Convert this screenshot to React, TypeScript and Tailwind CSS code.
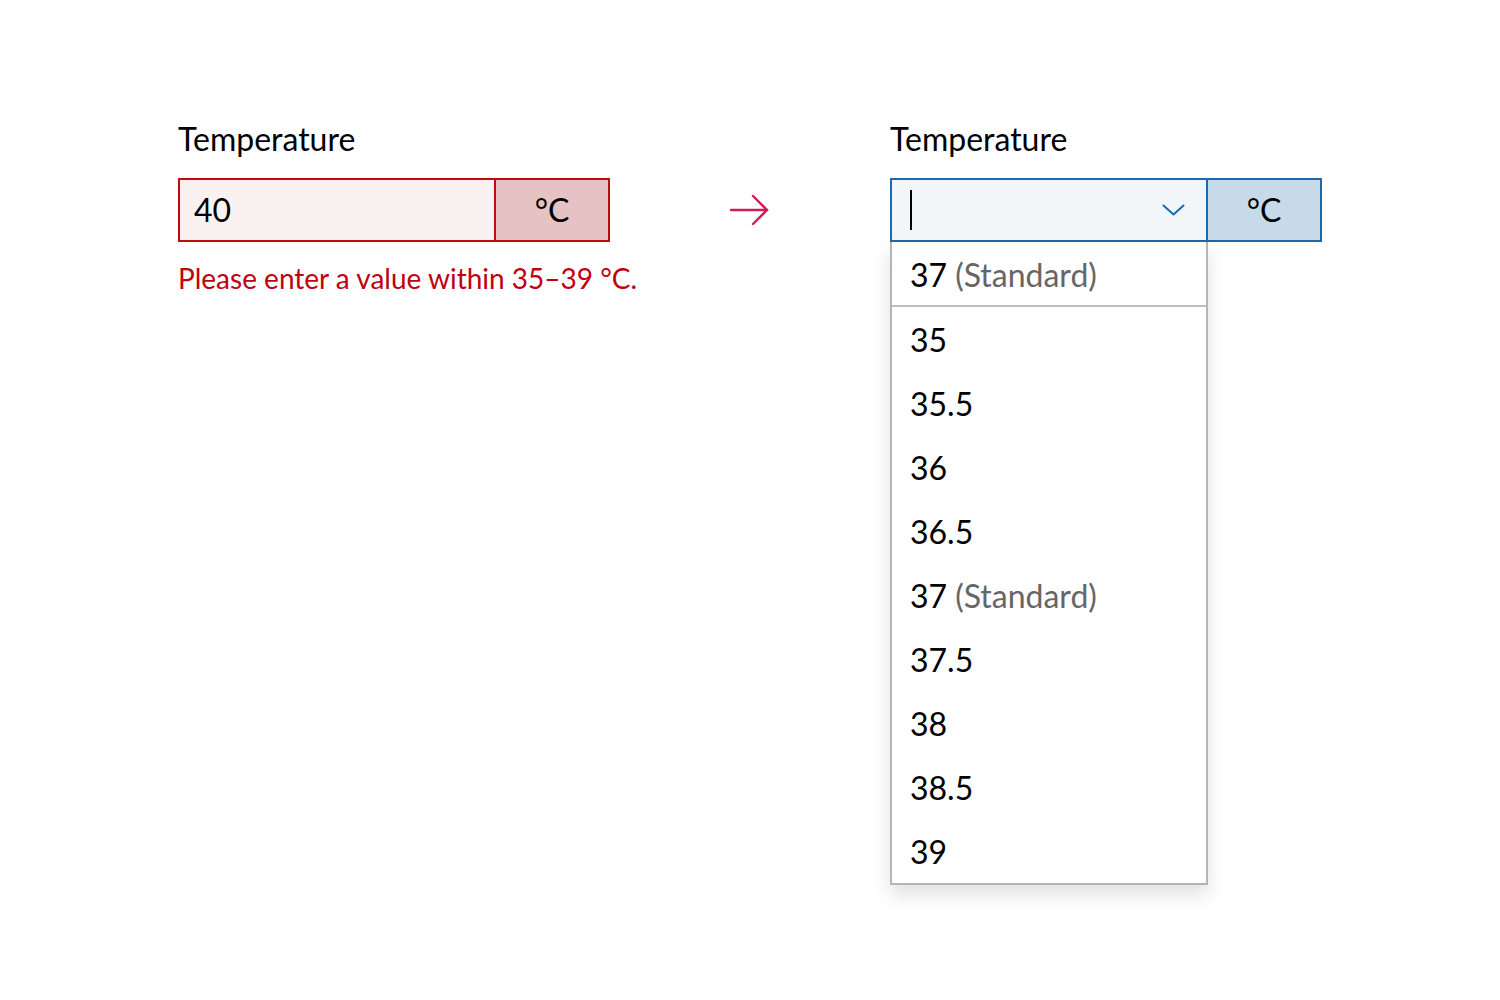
const options = ["35", "35.5", "36", "36.5", "37", "37.5", "38", "38.5", "39"];

function ErrorField() {
  return (
    <div className="w-[432px]">
      <div className="text-[32px] leading-[40px] text-black">Temperature</div>
      <div className="mt-[19px] flex h-16 border-2 border-[#bf0a0f]">
        <div className="flex flex-1 items-center bg-[#faf1f1] px-[14px] text-[32px] text-black">40</div>
        <div className="flex w-[114px] items-center justify-center border-l-2 border-[#bf0a0f] bg-[#e5c3c4] text-[32px] text-black">
          °C
        </div>
      </div>
      <div className="mt-[18px] whitespace-nowrap text-[28px] leading-[36px] text-[#c00010]">
        Please enter a value within 35–39 °C.
      </div>
    </div>
  );
}

function Arrow() {
  return (
    <div className="flex w-[280px] justify-center pt-[59px]">
      <svg width="44" height="64" viewBox="0 0 44 64" fill="none" stroke="#d6195a" strokeWidth="2.4" strokeLinecap="round">
        <path d="M3 32h36M25 18l14 14-14 14" />
      </svg>
    </div>
  );
}

function OptionRow({ value, tall }: { value: string; tall?: boolean }) {
  const std = value === "37";
  return (
    <li className={tall ? "flex h-[65px] items-center border-b-2 border-[#bdbdbd] px-[18px] pt-[2px]" : "flex h-16 items-center px-[18px] pt-[2px]"}>
      <span className="text-black">{value}</span>
      {std && <span className="ml-2 text-[#666]">(Standard)</span>}
    </li>
  );
}

function OpenField() {
  return (
    <div className="w-[432px]">
      <div className="text-[32px] leading-[40px] text-black">Temperature</div>
      <div className="relative mt-[19px]">
        <div className="flex h-16 border-2 border-[#1a6aad]">
          <div className="flex flex-1 items-center justify-between bg-[#f3f6f9] pl-[18px] pr-[21px]">
            <div className="h-10 w-[2px] bg-black" />
            <svg width="23" height="12" viewBox="0 0 23 12" fill="none" stroke="#1a6aad" strokeWidth="2" strokeLinecap="round" strokeLinejoin="round">
              <path d="M1.5 1.5 11.5 10.5 21.5 1.5" />
            </svg>
          </div>
          <div className="flex w-[114px] items-center justify-center border-l-2 border-[#1a6aad] bg-[#c6dae9] text-[32px] text-black">
            °C
          </div>
        </div>
        <ul className="absolute left-0 top-16 w-[318px] border-2 border-t-0 border-[#b5b5b5] bg-white text-[32px] shadow-[0_10px_18px_rgba(0,0,0,0.12)]">
          <OptionRow value="37" tall />
          {options.map((o) => (
            <OptionRow key={o} value={o} />
          ))}
        </ul>
      </div>
    </div>
  );
}

export default function App() {
  return (
    <div className="h-[1000px] w-[1500px] bg-white font-['Lato',sans-serif]">
      <div className="flex items-start pl-[178px] pt-[119px]">
        <ErrorField />
        <Arrow />
        <OpenField />
      </div>
    </div>
  );
}
